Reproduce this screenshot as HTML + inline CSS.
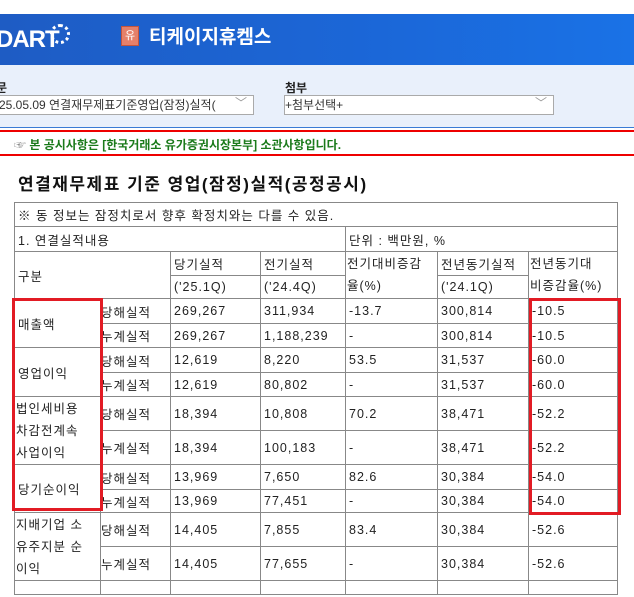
<!DOCTYPE html>
<html><head><meta charset="utf-8"><style>
body{margin:0;width:634px;height:597px;overflow:hidden;background:#fff;font-family:"Liberation Sans","Noto Sans CJK KR",sans-serif;position:relative}
.hdr{position:absolute;left:0;top:14px;width:634px;height:51px;background:linear-gradient(90deg,#1e5cc4,#1b67d8 60%,#1a72e6)}
.logo{position:absolute;left:-4px;top:12px;color:#fff;font-weight:bold;font-size:24px;letter-spacing:-1px}
.sun{position:absolute;left:50px;top:10px;width:20px;height:20px;border-radius:50%;border:3px dotted #fff;box-sizing:border-box}
.yu{position:absolute;left:121px;top:12px;width:16px;height:18px;background:#e5806a;border:1px solid #c4553e;color:#fff;font-size:11px;text-align:center;line-height:18px}
.co{position:absolute;left:149px;top:8px;color:#fff;font-size:19px;font-weight:bold}
.panel{position:absolute;left:0;top:65px;width:634px;height:62px;background:#e9f0fb;border-bottom:1px solid #3a7bd5}
.lbl{position:absolute;font-size:12px;font-weight:bold;color:#222}
.sel{position:absolute;height:18px;background:#fff;border:1px solid #aaa;font-size:12px;line-height:18px;color:#333;overflow:hidden;white-space:nowrap}
.sel i{position:absolute;right:6px;top:-2px;font-style:normal;color:#999}
.red1{position:absolute;left:0;top:130px;width:634px;height:2px;background:#e00}
.red2{position:absolute;left:0;top:154px;width:634px;height:2px;background:#e00}
.notice{position:absolute;left:14px;top:136px;font-size:12px;font-weight:bold;color:#1a7a1a}
h1{position:absolute;left:18px;top:170px;margin:0;font-size:17px;font-weight:bold;letter-spacing:1.5px;color:#111}
table{position:absolute;left:14px;top:202px;border-collapse:collapse;font-size:12.5px;color:#222;letter-spacing:1px;table-layout:fixed}
td{border:1px solid #888;padding:0 0 0 3px;white-space:nowrap;overflow:hidden;vertical-align:middle}
td.w{line-height:22px}
.box{position:absolute;border:3px solid #e21b24;box-sizing:border-box}
</style></head><body>
<div class="hdr"><div class="logo">DART</div><div class="sun"></div><div class="yu">유</div><div class="co">티케이지휴켐스</div></div>
<div class="panel">
<div class="lbl" style="left:-4px;top:14px">문</div>
<div class="sel" style="left:-2px;top:30px;width:254px">25.05.09 연결재무제표기준영업(잠정)실적(<i>﹀</i></div>
<div class="lbl" style="left:285px;top:14px">첨부</div>
<div class="sel" style="left:284px;top:30px;width:268px">+첨부선택+<i>﹀</i></div>
</div>
<div class="red1"></div>
<div class="notice"><span style="color:#888;font-weight:normal">☞</span> 본 공시사항은 [한국거래소 유가증권시장본부] 소관사항입니다.</div>
<div class="red2"></div>
<h1>연결재무제표 기준 영업(잠정)실적(공정공시)</h1>
<table>
<colgroup><col style="width:86px"><col style="width:70px"><col style="width:90px"><col style="width:85px"><col style="width:92px"><col style="width:91px"><col style="width:89px"></colgroup>
<tr style="height:24px"><td colspan="7">※ 동 정보는 잠정치로서 향후 확정치와는 다를 수 있음.</td></tr>
<tr style="height:25px"><td colspan="4">1. 연결실적내용</td><td colspan="3">단위 : 백만원, %</td></tr>
<tr style="height:24px"><td colspan="2" rowspan="2">구분</td><td>당기실적</td><td>전기실적</td><td rowspan="2" class="w" style="padding-left:1px">전기대비증감<br>율(%)</td><td>전년동기실적</td><td rowspan="2" class="w" style="padding-left:1px">전년동기대<br>비증감율(%)</td></tr>
<tr style="height:23px"><td>('25.1Q)</td><td>('24.4Q)</td><td>('24.1Q)</td></tr>
<tr style="height:25px"><td rowspan="2">매출액</td><td style="padding:0">당해실적</td><td>269,267</td><td>311,934</td><td>-13.7</td><td>300,814</td><td>-10.5</td></tr>
<tr style="height:24px"><td style="padding:0">누계실적</td><td>269,267</td><td>1,188,239</td><td>-</td><td>300,814</td><td>-10.5</td></tr>
<tr style="height:25px"><td rowspan="2">영업이익</td><td style="padding:0">당해실적</td><td>12,619</td><td>8,220</td><td>53.5</td><td>31,537</td><td>-60.0</td></tr>
<tr style="height:24px"><td style="padding:0">누계실적</td><td>12,619</td><td>80,802</td><td>-</td><td>31,537</td><td>-60.0</td></tr>
<tr style="height:34px"><td rowspan="2" class="w" style="padding-left:1px">법인세비용<br>차감전계속<br>사업이익</td><td style="padding:0">당해실적</td><td>18,394</td><td>10,808</td><td>70.2</td><td>38,471</td><td>-52.2</td></tr>
<tr style="height:34px"><td style="padding:0">누계실적</td><td>18,394</td><td>100,183</td><td>-</td><td>38,471</td><td>-52.2</td></tr>
<tr style="height:25px"><td rowspan="2">당기순이익</td><td style="padding:0">당해실적</td><td>13,969</td><td>7,650</td><td>82.6</td><td>30,384</td><td>-54.0</td></tr>
<tr style="height:23px"><td style="padding:0">누계실적</td><td>13,969</td><td>77,451</td><td>-</td><td>30,384</td><td>-54.0</td></tr>
<tr style="height:34px"><td rowspan="2" class="w" style="padding-left:1px">지배기업 소<br>유주지분 순<br>이익</td><td style="padding:0">당해실적</td><td>14,405</td><td>7,855</td><td>83.4</td><td>30,384</td><td>-52.6</td></tr>
<tr style="height:34px"><td style="padding:0">누계실적</td><td>14,405</td><td>77,655</td><td>-</td><td>30,384</td><td>-52.6</td></tr>
<tr style="height:14px"><td></td><td></td><td></td><td></td><td></td><td></td><td></td></tr>
</table>
<div class="box" style="left:12px;top:298px;width:91px;height:213px"></div>
<div class="box" style="left:529px;top:298px;width:92px;height:217px"></div>
</body></html>
